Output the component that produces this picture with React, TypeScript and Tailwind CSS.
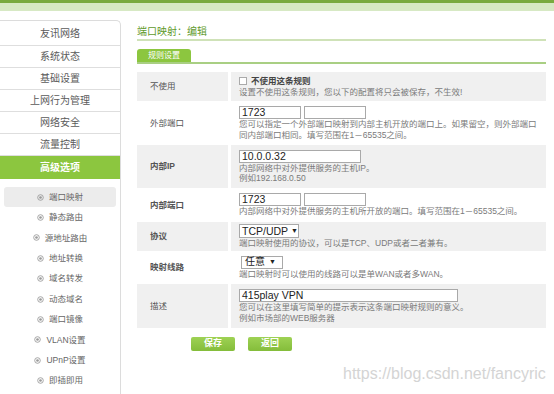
import React from 'react';

const mainMenu = ['友讯网络', '系统状态', '基础设置', '上网行为管理', '网络安全', '流量控制'];
const subMenu = ['端口映射', '静态路由', '源地址路由', '地址转换', '域名转发', '动态域名', '端口镜像', 'VLAN设置', 'UPnP设置', '即插即用'];

const Ring = () => (
  <svg width="7" height="7" viewBox="0 0 8 8" className="shrink-0">
    <circle cx="4" cy="4" r="3.2" fill="none" stroke="#999" strokeWidth="1" />
    <circle cx="4" cy="4" r="1.5" fill="#999" />
  </svg>
);

const Input = ({ value = '', w }: { value?: string; w: string }) => (
  <div className={`${w} h-[13px] border border-[#a9a9a9] bg-white text-[10.5px] leading-[11px] text-[#222] px-[2px] overflow-hidden`}>
    {value}
  </div>
);

const Help = ({ children }: { children: React.ReactNode }) => (
  <div className="text-[8.5px] leading-[10.5px] text-[#7a7a7a] whitespace-nowrap">{children}</div>
);

const Row = ({
  label,
  bold,
  gray,
  h,
  children,
}: {
  label: string;
  bold?: boolean;
  gray?: boolean;
  h: string;
  children: React.ReactNode;
}) => (
  <div className={`flex gap-[3px] ${h}`}>
    <div className={`w-[91px] shrink-0 flex items-center pl-[13px] text-[8.5px] text-[#555] ${bold ? 'font-bold' : ''} ${gray ? 'bg-[#f0f0f0]' : ''}`}>
      {label}
    </div>
    <div className={`flex-1 flex flex-col justify-center pl-[8px] ${gray ? 'bg-[#f0f0f0]' : ''}`}>{children}</div>
  </div>
);

const App = () => {
  return (
    <div
      className="relative w-[554px] h-[394px] overflow-hidden bg-white"
      style={{ fontFamily: '"Liberation Sans", "Noto Sans CJK SC", sans-serif' }}
    >
      <div className="h-[3px] bg-[#79aa3f]" />
      <div className="h-[8px] bg-[#d7e9c4]" />
      <div className="flex">
        <div className="w-[121px] shrink-0 mt-[9px] border-t border-r border-[#dcdcdc] rounded-tr-[5px] h-[380px]">
          {mainMenu.map((m, i) => (
            <div
              key={m}
              className={`${i === 0 ? 'h-[25px]' : 'h-[22px]'} border-b border-[#dedede] flex items-center justify-center text-[10px] text-[#5a5a5a]`}
            >
              {m}
            </div>
          ))}
          <div className="h-[23px] bg-[#8cc63f] flex items-center justify-center text-[10px] font-bold text-white">
            高级选项
          </div>
          <div className="pt-[8px] px-[4px]">
            {subMenu.map((s, i) => (
              <div
                key={s}
                className={`h-[20.4px] flex items-center justify-center gap-[5px] text-[8.5px] text-[#666] ${i === 0 ? 'bg-[#ececec] rounded-[3px]' : ''}`}
              >
                <Ring />
                <span>{s}</span>
              </div>
            ))}
          </div>
        </div>

        <div className="flex-1 pl-[16px] pr-[8px]">
          <div className="mt-[13px] h-[17px] border-b-2 border-[#cfe2b8] text-[10px] text-[#5f9a2c] leading-[15px]">
            端口映射：编辑
          </div>
          <div className="mt-[8px] border-b-2 border-[#a9cf83] flex">
            <div className="w-[54px] h-[13px] bg-[#8cc63f] rounded-t-[3px] flex items-center justify-center text-[8px] text-white">
              规则设置
            </div>
          </div>

          <div className="mt-[8px] flex flex-col gap-[2px]">
            <Row label="不使用" gray h="h-[29px]">
              <div className="flex items-center gap-[4px] text-[8.5px] leading-[11px] font-bold text-[#444]">
                <div className="w-[8px] h-[8px] border border-[#aaa] bg-white" />
                不使用这条规则
              </div>
              <Help>设置不使用这条规则，您以下的配置将只会被保存，不生效!</Help>
            </Row>
            <Row label="外部端口" h="h-[40px]">
              <div className="flex gap-[3px]">
                <Input value="1723" w="w-[62px]" />
                <Input w="w-[62px]" />
              </div>
              <Help>
                您可以指定一个外部端口映射到内部主机开放的端口上。如果留空，则外部端口
                <br />
                同内部端口相同。填写范围在1－65535之间。
              </Help>
            </Row>
            <Row label="内部IP" bold gray h="h-[43px]">
              <Input value="10.0.0.32" w="w-[122px]" />
              <Help>
                内部网络中对外提供服务的主机IP。
                <br />
                例如192.168.0.50
              </Help>
            </Row>
            <Row label="内部端口" bold h="h-[30px]">
              <div className="flex gap-[3px]">
                <Input value="1723" w="w-[62px]" />
                <Input w="w-[62px]" />
              </div>
              <Help>内部网络中对外提供服务的主机所开放的端口。填写范围在1－65535之间。</Help>
            </Row>
            <Row label="协议" bold gray h="h-[29px]">
              <div className="w-[60px] h-[14px] border border-[#a9a9a9] bg-white text-[10.5px] leading-[12px] text-[#222] px-[2px] flex items-center gap-[3px]">
                TCP/UDP <span className="text-[7px]">▼</span>
              </div>
              <Help>端口映射使用的协议，可以是TCP、UDP或者二者兼有。</Help>
            </Row>
            <Row label="映射线路" bold h="h-[29px]">
              <div className="ml-[2px] w-[42px] h-[13px] border border-[#a9a9a9] bg-white text-[10px] leading-[12px] text-[#222] px-[3px] flex items-center justify-between">
                任意 <span className="text-[7px] pr-[3px]">▼</span>
              </div>
              <Help>端口映射时可以使用的线路可以是单WAN或者多WAN。</Help>
            </Row>
            <Row label="描述" gray h="h-[44px]">
              <Input value="415play VPN" w="w-[219px]" />
              <Help>
                您可以在这里填写简单的提示表示这条端口映射规则的意义。
                <br />
                例如市场部的WEB服务器
              </Help>
            </Row>
          </div>

          <div className="mt-[9px] ml-[54px] flex gap-[13px]">
            <div className="w-[44px] h-[14px] rounded-[2px] bg-gradient-to-b from-[#9ed254] to-[#84bd3a] flex items-center justify-center text-[9px] font-bold text-white">
              保存
            </div>
            <div className="w-[44px] h-[14px] rounded-[2px] bg-gradient-to-b from-[#9ed254] to-[#84bd3a] flex items-center justify-center text-[9px] font-bold text-white">
              返回
            </div>
          </div>
        </div>
      </div>

      <div className="absolute left-[343px] top-[362px] text-[16px] text-[#d4d4d4]">
        https://blog.csdn.net/fancyric
      </div>
    </div>
  );
};

export default App;
